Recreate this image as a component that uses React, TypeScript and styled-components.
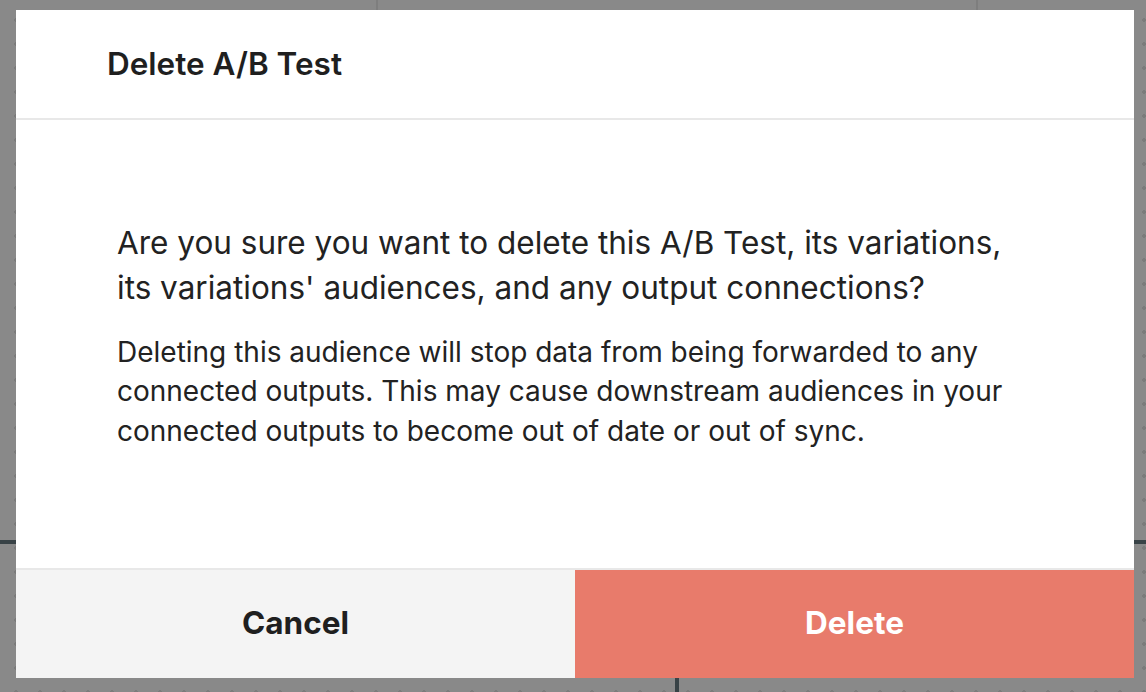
import React from "react";
import styled, { createGlobalStyle } from "styled-components";

const Global = createGlobalStyle`
  html, body { margin: 0; padding: 0; }
  body {
    width: 1146px;
    height: 692px;
    overflow: hidden;
    font-family: Inter, "Noto Sans", sans-serif;
    -webkit-font-smoothing: antialiased;
  }
  #root { height: 100%; }
`;

const Canvas = styled.div`
  position: relative;
  width: 1146px;
  height: 692px;
  background-color: #898989;
  background-image: radial-gradient(circle, #7b7b7b 1.6px, transparent 2px);
  background-size: 24px 24px;
  background-position: 4px 8px;
  overflow: hidden;
`;

/* edges of the flow nodes and connectors behind the overlay */
const Edge = styled.div<{ $x: number; $y: number; $w: number; $h: number; $tone: string }>`
  position: absolute;
  left: ${(p) => p.$x}px;
  top: ${(p) => p.$y}px;
  width: ${(p) => p.$w}px;
  height: ${(p) => p.$h}px;
  background: ${(p) => p.$tone};
`;

const Dialog = styled.div`
  position: absolute;
  left: 16px;
  top: 10px;
  width: 1118px;
  height: 668px;
  background: #ffffff;
  display: flex;
  flex-direction: column;
`;

const Header = styled.div`
  flex: 0 0 auto;
  height: 110px;
  box-sizing: border-box;
  display: flex;
  align-items: center;
  padding: 0 0 2px 91px;
  border-bottom: 2px solid #e8e8e8;
`;

const Title = styled.h2`
  margin: 0;
  font-size: 31.5px;
  font-weight: 600;
  color: #1f1f1f;
`;

const Body = styled.div`
  flex: 1 1 auto;
  display: flex;
  flex-direction: column;
  padding: 100px 100px 0 101px;
  border-bottom: 2px solid #e8e8e8;
`;

const Question = styled.p`
  margin: 0 0 23px;
  font-size: 31.5px;
  line-height: 45px;
  font-weight: 400;
  color: #222222;
  white-space: nowrap;
`;

const Note = styled.p`
  margin: 0;
  font-size: 28px;
  line-height: 39.4px;
  font-weight: 400;
  color: #222222;
  white-space: nowrap;
`;

const Footer = styled.div`
  height: 108px;
  flex: 0 0 auto;
  display: grid;
  grid-template-columns: 1fr 1fr;
`;

const Action = styled.button<{ $danger?: boolean }>`
  border: none;
  margin: 0;
  padding: 0 0 3px;
  font-family: Inter, "Noto Sans", sans-serif;
  font-size: 31.5px;
  font-weight: 700;
  background: ${(p) => (p.$danger ? "#e87b6b" : "#f4f4f4")};
  color: ${(p) => (p.$danger ? "#ffffff" : "#1f1f1f")};
  cursor: pointer;
`;

export default function App() {
  return (
    <>
      <Global />
      <Canvas>
        <Edge $x={376} $y={0} $w={2} $h={10} $tone="#7e7e7e" />
        <Edge $x={976} $y={0} $w={2} $h={10} $tone="#7e7e7e" />
        <Edge $x={0} $y={540} $w={1146} $h={4} $tone="#384246" />
        <Edge $x={675} $y={540} $w={4} $h={152} $tone="#384246" />
        <Dialog>
          <Header>
            <Title>Delete A/B Test</Title>
          </Header>
          <Body>
            <Question>
              Are you sure you want to delete this A/B Test, its variations,
              <br />
              its variations' audiences, and any output connections?
            </Question>
            <Note>
              Deleting this audience will stop data from being forwarded to any
              <br />
              connected outputs. This may cause downstream audiences in your
              <br />
              connected outputs to become out of date or out of sync.
            </Note>
          </Body>
          <Footer>
            <Action>Cancel</Action>
            <Action $danger>Delete</Action>
          </Footer>
        </Dialog>
      </Canvas>
    </>
  );
}
